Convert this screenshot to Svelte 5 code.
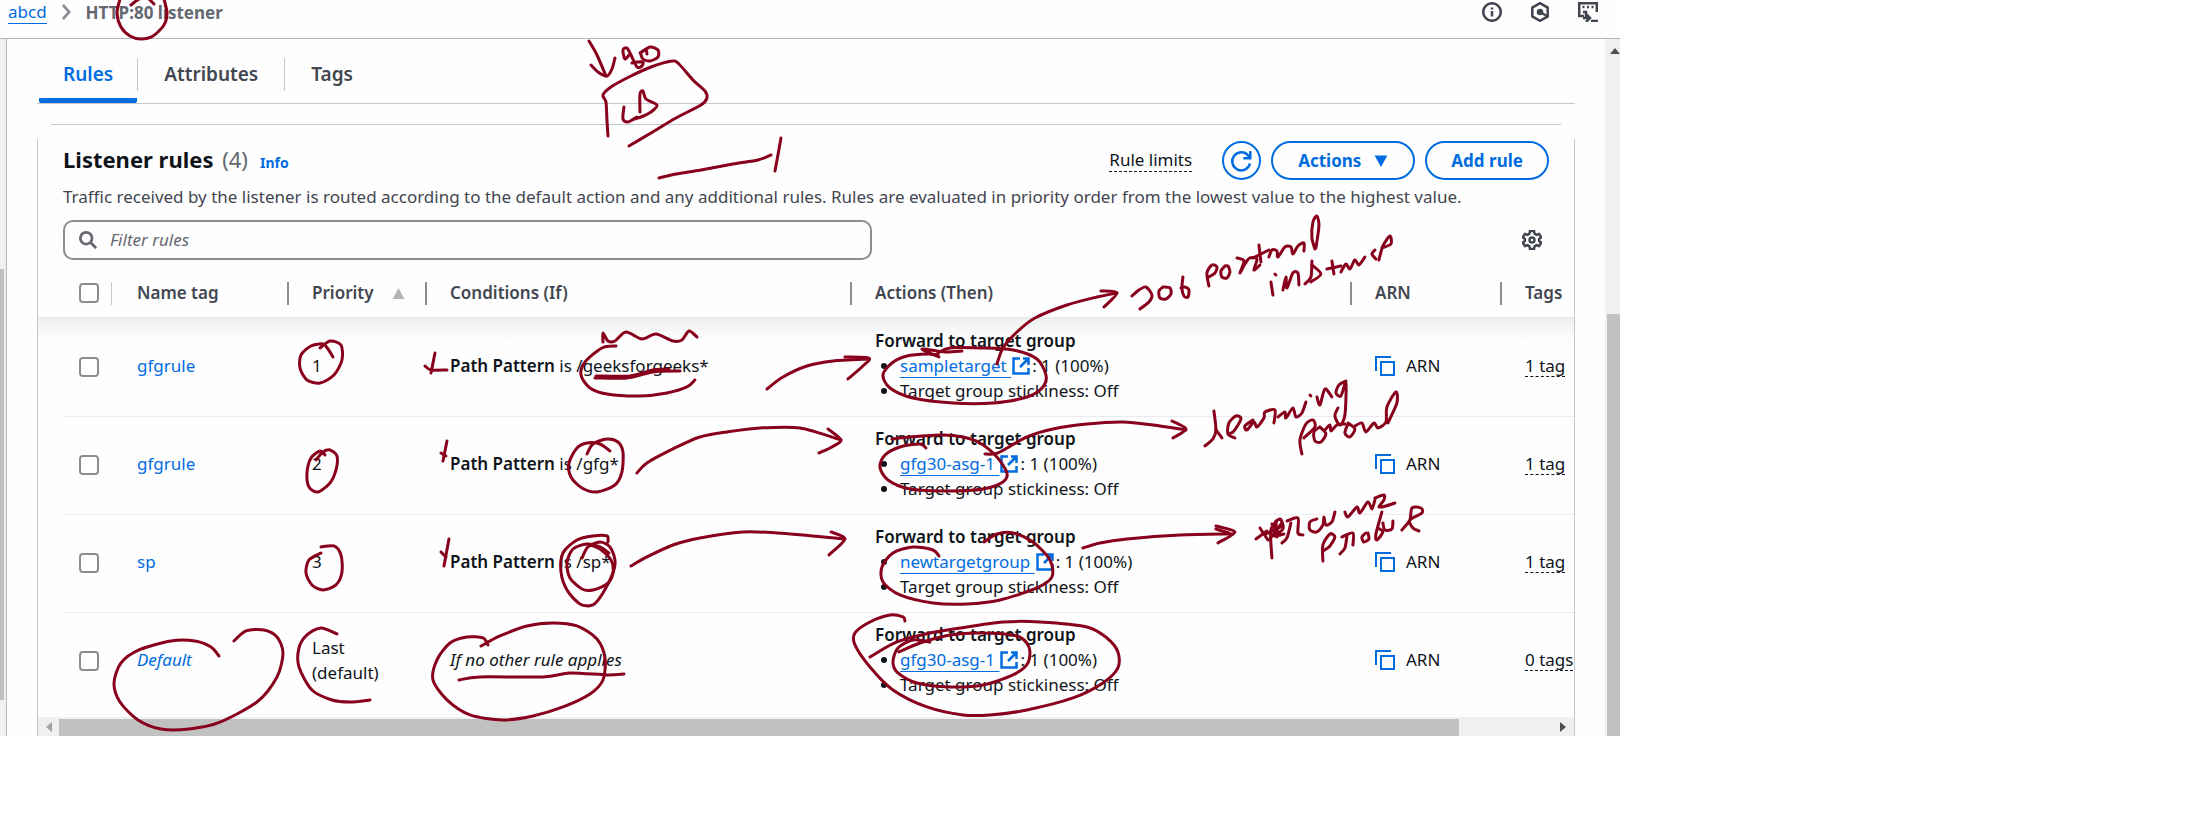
<script>
  const conditionPrefix = 'Path Pattern';
  const rules = [
    { id: 'r1', name: 'gfgrule', priority: ['1'], path: '/geeksforgeeks*', target: 'sampletarget', tags: '1 tag' },
    { id: 'r2', name: 'gfgrule', priority: ['2'], path: '/gfg*', target: 'gfg30-asg-1', tags: '1 tag' },
    { id: 'r3', name: 'sp', priority: ['3'], path: '/sp*', target: 'newtargetgroup', tags: '1 tag' },
    { id: 'r4', name: 'Default', isDefault: true, priority: ['Last', '(default)'], path: '', target: 'gfg30-asg-1', tags: '0 tags' }
  ];

  // Pen strokes, each a list of x,y points joined by a smooth curve.
  const curves = [
    '120,-1 117,13 121,27 130,36 141,39 153,36 164,25 167,13 164,-1',
    '131,5 136,1 141,-2', '148,-2 154,4',
    '589,41 597,55 606,76', '591,65 598,72 607,76 612,69 615,58',
    '629,55 625,59 623,50 627,48 631,55 637,67 642,66 643,62 637,62 632,63',
    '640,53 650,47 658,50 658,57 650,61 643,59 641,53 646,50 647,54',
    '608,136 607,120 606,102 603,95 611,87 629,77 651,67 672,61 679,64 693,80 705,91 707,98 701,105 676,118 651,133 629,146',
    '624,107 623,119 628,122 637,117', '640,112 640,94 643,91 646,99 657,105 651,112 641,117 634,119',
    '659,178 676,174 701,170 733,164 758,160 771,155', '781,138 778,155 775,171',
    '997,364 1003,348 1017,332 1035,318 1067,305 1097,297 1117,293', '1101,291 1117,293 1104,307',
    '1132,296 1139,290 1146,287 1152,295 1149,302 1140,309',
    '1163,287 1159,291 1160,298 1166,299 1171,294 1170,288 1163,287',
    '1183,277 1182,288 1184,296 1188,297 1189,290 1185,287 1181,288',
    '1209,286 1207,273 1212,265 1217,267 1215,273 1209,277',
    '1225,266 1221,271 1222,277 1227,278 1230,272 1228,266 1225,266',
    '1237,258 1244,261 1240,273 1245,264 1250,258 1257,259 1254,270 1260,265', '1259,245 1261,262', '1253,258 1269,250',
    '1269,257 1272,250 1277,251 1278,257 1285,247 1291,247 1293,254 1298,246 1304,243 1304,251',
    '1315,249 1312,238 1313,222 1317,216 1319,226 1316,248',
    '1273,295 1271,282', '1275,274 1276,275', '1283,290 1286,277 1287,288 1293,273 1298,273 1299,285',
    '1312,261 1311,277 1305,284', '1312,265 1321,274 1311,282', '1332,261 1334,274', '1327,269 1341,266',
    '1341,272 1346,264 1350,269 1355,260 1359,265 1365,257', '1375,250 1372,254 1376,259',
    '1379,260 1383,246 1390,236 1391,244 1382,248',
    '320,348 330,341 341,345 342,360 334,375 320,383 307,380 300,368 301,355 311,346 323,344 328,349 333,357',
    '316,460 323,452 330,450 337,456 336,470 330,483 318,492 309,487 307,473 311,458 320,451 325,455',
    '435,353 431,373', '425,366 431,370 447,370', '447,441 443,461', '441,453 446,456', '449,539 444,566', '441,552 446,557',
    '603,342 603,333 608,341 615,341 626,332 642,339 656,334 673,341 682,340 689,331 697,337',
    '616,346 602,348 585,362 581,375 590,388 607,394 640,396 667,393 687,387 695,380',
    '595,378 627,378 653,372 680,371', '596,376 630,376 653,370 669,369',
    '767,389 783,377 807,366 833,361 869,359', '845,357 869,358 863,366 848,379',
    '587,454 593,444 607,439 618,442 623,452 622,472 615,485 597,492 582,488 571,477 569,463 577,448 587,443 600,444 610,451',
    '637,473 647,463 677,447 700,437 727,432 760,428 800,428 841,440', '828,429 841,440 832,447 819,453',
    '962,351 945,352 922,349 939,357',
    '938,355 928,354 907,356 892,363 883,375 890,388 913,398 953,403 993,403 1027,397 1043,387 1046,375 1037,359 1013,350 980,348 950,348 938,353',
    '926,448 920,444 900,447 885,455 880,467 888,480 910,489 950,491 983,489 1003,482 1007,473 997,457 980,443 963,437 943,435 910,437 892,439',
    '985,454 998,453 1027,437 1053,429 1087,424 1123,422 1153,425 1186,430', '1172,421 1186,429 1173,438',
    '1214,411 1216,430 1213,439 1205,446', '1216,430 1222,438',
    '1229,434 1234,431 1241,419 1236,416 1229,423 1228,434 1235,438',
    '1253,420 1245,426 1247,430 1254,422 1257,427 1264,418 1265,412 1275,410 1274,423',
    '1278,417 1285,412 1286,418 1293,408 1296,417 1302,413 1306,402', '1310,395 1311,396',
    '1317,397 1320,405 1325,389 1332,397', '1346,381 1339,385 1336,393 1341,396 1346,383 1345,415 1340,425 1335,416 1338,408',
    '1302,454 1300,440 1306,424 1313,420 1315,427 1304,438',
    '1320,427 1314,432 1315,441 1321,442 1326,434 1320,427', '1325,430 1330,425 1331,431 1337,425 1345,424',
    '1348,424 1345,433 1350,437 1355,429 1348,423', '1355,426 1362,423 1366,432 1374,423 1378,428 1386,422 1387,407 1396,392 1397,403 1388,423',
    '1083,548 1100,543 1127,539 1180,535 1233,534', '1216,526 1235,532 1218,543', '1216,529 1229,533',
    '1256,539 1267,531', '1260,528 1268,540', '1272,558 1271,530 1280,519 1283,529 1274,536 1284,534', '1270,539 1282,523', '1266,534 1283,526',
    '1272,524 1280,535', '1276,521 1277,537',
    '1282,543 1287,538 1291,523', '1287,521 1298,518 1298,533 1303,535',
    '1317,519 1310,522 1310,530 1317,532 1323,525 1324,517 1326,525 1332,522 1335,512',
    '1345,512 1348,517 1357,507 1360,513 1368,502 1372,509 1375,500', '1375,498 1384,495 1384,500 1379,507 1386,506 1395,503',
    '1323,561 1323,545 1330,534 1335,537 1330,546 1323,551', '1340,554 1345,548 1347,536', '1342,537 1353,533 1353,545',
    '1366,533 1362,537 1364,542 1369,539 1368,533', '1382,512 1376,534 1377,540 1383,532 1378,528', '1383,523 1385,530 1392,529 1393,521',
    '1402,530 1410,520 1412,508 1421,508 1422,513 1410,520 1413,528 1419,531',
    '321,547 334,546 341,555 342,572 336,585 323,590 312,585 306,573 309,560 321,553',
    '219,656 211,647 195,641 171,641 139,650 121,663 114,683 120,702 138,720 161,729 189,729 218,723 257,702 277,677 283,653 277,637 264,630 246,631 234,641',
    '337,634 321,628 307,635 299,648 299,667 312,690 332,700 350,702 370,700',
    '608,542 607,536 593,536 577,540 563,553 561,572 567,590 580,604 593,605 603,593 613,573 615,560 610,547 600,542 588,547 582,558',
    '609,553 600,547 587,544 573,549 567,563 570,578 582,589 593,590 607,584 613,573 611,560 600,549 590,545',
    '631,566 647,557 673,545 700,538 743,532 777,533 813,536 845,539', '831,532 845,539 829,555',
    '481,646 500,636 527,626 553,623 577,626 597,639 605,658 603,680 590,694 563,707 533,716 503,720 470,715 447,700 433,680 437,660 450,643 467,637 483,638 488,645',
    '459,680 480,677 543,677 570,673 607,675 624,674',
    '939,556 933,550 913,547 893,553 882,567 883,582 900,595 933,603 967,604 1000,600 1037,588 1052,577 1050,560 1033,542 1013,533 997,534 984,542',
    '905,621 903,617 890,615 870,622 855,633 855,645 870,667 893,690 927,707 963,715 990,715 1027,710 1073,698 1103,683 1118,668 1118,652 1107,638 1087,627 1040,622 1003,622 967,627 930,633 897,642 870,657',
    '930,642 913,640 898,648 893,662 898,673 917,683 950,687 983,685 1013,675 1028,663 1029,647 1017,636 983,633 950,635 920,643 899,652'
  ];

  function toPath(text) {
    const p = text.split(' ').map((s) => s.split(',').map(Number));
    let d = `M${p[0][0]} ${p[0][1]}`;
    for (let i = 0; i < p.length - 1; i++) {
      const a = p[i - 1] ?? p[i], b = p[i], c = p[i + 1], e = p[i + 2] ?? c;
      d += `C${b[0] + (c[0] - a[0]) / 7} ${b[1] + (c[1] - a[1]) / 7} ${c[0] - (e[0] - b[0]) / 7} ${c[1] - (e[1] - b[1]) / 7} ${c[0]} ${c[1]}`;
    }
    return d;
  }
</script>

<div class="frame">
  <header>
    <nav aria-label="Breadcrumb">
      <a class="crumb" href="#abcd">abcd</a>
      <svg class="chev" viewBox="0 0 12 20"><path d="M2 2l7 8-7 8" /></svg>
      <span class="current">HTTP:80 listener</span>
    </nav>
    <div class="tools">
      <button aria-label="Info panel"><svg viewBox="0 0 20 20"><circle cx="10" cy="10" r="8.8" /><path d="M10 9v5.500M10 5.500v2" /></svg></button>
      <button aria-label="Diagnostics"><svg viewBox="0 0 20 20"><path d="M10 1.200l7.700 4.400v8.800L10 18.800l-7.700-4.400V5.600z" /><circle cx="10" cy="10" r="2" fill="#424650" /><path d="M10 10l7 4" /></svg></button>
      <button aria-label="CloudShell"><svg viewBox="0 0 20 20"><path d="M6 14H1.200V1.200h17.600V10M4.500 5h2M9 5h2M13.500 5h2M5 10h3v6M5 16h6M8 12l4 4-4 4M13 19h7" /></svg></button>
    </div>
  </header>

  <div class="body">
    <div class="rail"><div class="rail-thumb"></div></div>

    <main>
      <div class="tabs" role="tablist">
        <button role="tab" aria-selected="true" class="on"><span>Rules</span></button>
        <button role="tab" aria-selected="false"><span>Attributes</span></button>
        <button role="tab" aria-selected="false"><span>Tags</span></button>
      </div>

      <div class="topline"></div>
      <section>
        <div class="head">
          <h2>Listener rules <span>(4)</span></h2>
          <a class="info" href="#info">Info</a>
          <div class="actions">
            <button class="limits">Rule limits</button>
            <button class="pill round" aria-label="Refresh"><svg viewBox="0 0 20 20"><path d="M18.500 12.500A9 9 0 1 1 17 5l1.500 2M18.800 0v7.200h-7" /></svg></button>
            <button class="pill wide">Actions <svg viewBox="0 0 12 11"><path d="M1 1h10L6 10z" /></svg></button>
            <button class="pill">Add rule</button>
          </div>
        </div>
        <p class="desc">Traffic received by the listener is routed according to the default action and any additional rules. Rules are evaluated in priority order from the lowest value to the highest value.</p>
        <div class="filter">
          <label class="search">
            <svg viewBox="0 0 20 20"><circle cx="8" cy="8" r="6.500" /><path d="M12.500 12.500L19 19" /></svg>
            <input type="text" aria-label="Filter rules" placeholder="Filter rules" />
          </label>
          <button class="gear" aria-label="Preferences"><svg viewBox="0 0 20 20"><path d="M8 1h4l.6 2.700 1.900 1.100 2.600-.9 2 3.400-2 1.800v1.800l2 1.800-2 3.400-2.600-.9-1.900 1.100L12 19H8l-.6-2.700-1.900-1.100-2.600.9-2-3.400 2-1.800V9.100l-2-1.800 2-3.400 2.600.9 1.900-1.100z" /><circle cx="10" cy="10" r="2.500" /></svg></button>
        </div>

        <table>
          <colgroup><col class="c0" /><col class="c1" /><col class="c2" /><col class="c3" /><col class="c4" /><col class="c5" /><col /></colgroup>
          <thead>
            <tr>
              <th class="check"><input type="checkbox" aria-label="Select all rules" /></th>
              <th>Name tag</th>
              <th>Priority <svg class="sort" viewBox="0 0 12 11"><path d="M6 0l6 11H0z" /></svg></th>
              <th>Conditions (If)</th>
              <th>Actions (Then)</th>
              <th>ARN</th>
              <th>Tags</th>
            </tr>
          </thead>
          <tbody>
            {#each rules as rule (rule.id)}
              <tr>
                <td class="check"><input type="checkbox" aria-label={`Select ${rule.name} ${rule.priority[0]}`} /></td>
                <td><a href="#rule" class:it={rule.isDefault}>{rule.name}</a></td>
                <td>{#each rule.priority as line}<div>{line}</div>{/each}</td>
                <td>
                  {#if rule.isDefault}<em>If no other rule applies</em>{:else}<b>{conditionPrefix}</b> is {rule.path}{/if}
                </td>
                <td>
                  <b>Forward to target group</b>
                  <ul>
                    <li><a class="ext" href="#target">{rule.target}&nbsp;</a><svg class="out" viewBox="0 0 18 18"><path d="M8 1.500H1.500v15h15V11M11 1.500h5.500V8M16 2L8 10" /></svg>: 1 (100%)</li>
                    <li>Target group stickiness: Off</li>
                  </ul>
                </td>
                <td><button class="copy"><svg viewBox="0 0 20 20"><path d="M1 15V1h15M6 6h13v13H6z" /></svg>ARN</button></td>
                <td><button class="tag">{rule.tags}</button></td>
              </tr>
            {/each}
          </tbody>
        </table>

        <div class="hbar">
          <svg viewBox="0 0 6 10"><path d="M6 0v10L0 5z" fill="#a3a3a3" /></svg>
          <div class="track"><div class="hthumb"></div></div>
          <svg viewBox="0 0 6 10"><path d="M0 0v10l6-5z" fill="#505050" /></svg>
        </div>
      </section>
    </main>

    <div class="vbar">
      <svg viewBox="0 0 10 6"><path d="M0 6h10L5 0z" fill="#505050" /></svg>
      <div class="vthumb"></div>
    </div>
  </div>

  <svg class="ink" viewBox="0 0 1620 736" aria-hidden="true">
    {#each curves as c}<path d={toPath(c)} />{/each}
  </svg>
</div>

<style>
  :global(body) { background: #fff; }
  .frame, .frame * { box-sizing: border-box; }
  .frame {
    position: relative;
    width: 73.8%;
    overflow: hidden;
    font: 17px/25px 'Noto Sans', 'Open Sans', sans-serif;
    color: #0f141a;
    background: #fefefe;
  }
  button { font: inherit; color: inherit; background: none; border: 0; padding: 0; }
  a { color: #006ce0; text-decoration: none; }
  svg { display: block; fill: none; flex: none; }
  b { font-weight: 600; }

  header { display: flex; align-items: flex-start; justify-content: space-between; height: 39px; padding: 0 22px 0 8px; border-bottom: 1px solid #b4b4bb; }
  nav { display: flex; align-items: center; gap: 14px; line-height: 23px; }
  .crumb { border-bottom: 1px solid #006ce0; }
  .chev { width: 11px; height: 18px; stroke: #8c8c94; stroke-width: 3; }
  .current { font-weight: 700; color: #656871; }
  .tools { display: flex; gap: 28px; padding-top: 2px; }
  .tools svg { width: 20px; height: 20px; stroke: #424650; stroke-width: 2.5; }

  .body { display: flex; align-items: stretch; }
  .rail { width: 7px; background: #f0f0f0; border-right: 1px solid #b4b4bb; padding-top: 230px; padding-bottom: 36px; display: flex; }
  .rail-thumb { width: 4px; background: #c1c1c1; }
  main { flex: 1; min-width: 0; padding: 0 30px; }

  .tabs { display: flex; border-bottom: 1px solid #c6c6cd; padding: 19px 2px 0; height: 65px; }
  .tabs button { height: 45px; padding-bottom: 12px; font-size: 19px; font-weight: 600; color: #424650; }
  .tabs span { display: block; padding: 0 26px; line-height: 33px; border-left: 1px solid #c6c6cd; }
  .tabs .on { color: #006ce0; border-bottom: 5px solid #006ce0; border-radius: 2px; padding-bottom: 7px; }
  .tabs .on span { padding: 0 24px; border-left: 0; }

  .topline { height: 1px; margin: 20px 14px 14px; background: #c6c6cd; }
  section { border: solid #c6c6cd; border-width: 0 1px; }
  .head { display: flex; align-items: center; padding: 1px 25px 0; height: 42px; }
  h2 { margin: 0; padding-bottom: 3px; font-size: 22px; line-height: 30px; font-weight: 700; }
  h2 span { margin-left: 3px; font-weight: 400; color: #656871; }
  .info { margin: 3px 0 0 12px; font-size: 14px; font-weight: 700; }
  .actions { display: flex; align-items: center; gap: 10px; margin-left: auto; }
  .limits { border-bottom: 1px dashed #0f141a; line-height: 22px; margin-right: 20px; }
  .pill { display: flex; align-items: center; justify-content: center; gap: 13px; height: 39px; padding: 0 24px; border: 2px solid #006ce0; border-radius: 20px; color: #006ce0; font-weight: 700; }
  .wide { padding: 0 25px; }
  .round { width: 39px; padding: 0; }
  .round svg { width: 21px; height: 20px; stroke: #006ce0; stroke-width: 2.5; overflow: visible; }
  .wide svg { width: 14px; height: 12px; fill: #006ce0; stroke: #006ce0; stroke-width: 1; }
  .desc { margin: 0; padding: 3px 25px 0; color: #424650; white-space: nowrap; }
  .filter { display: flex; align-items: center; justify-content: space-between; padding: 11px 32px 0 25px; }
  .search { display: flex; align-items: center; gap: 13px; flex: 0 1 809px; height: 40px; padding: 0 14px; border: 2px solid #8c8c94; border-radius: 10px; }
  .search svg { width: 18px; height: 18px; stroke: #656871; stroke-width: 3; }
  .search input { flex: 1; min-width: 0; border: 0; outline: 0; padding: 0 0 2px; background: none; font: inherit; }
  .search input::placeholder { color: #656871; font-style: italic; opacity: 1; }
  .gear svg { width: 20px; height: 20px; stroke: #424650; stroke-width: 2.5; }

  table { width: 100%; table-layout: fixed; border-collapse: separate; border-spacing: 0; margin-top: 10px; }
  .c0 { width: 74px; }
  .c1 { width: 175px; }
  .c2 { width: 138px; }
  .c3 { width: 425px; }
  .c4 { width: 500px; }
  .c5 { width: 150px; }
  th, td { padding: 0 0 0 25px; text-align: left; white-space: nowrap; }
  th {
    height: 49px;
    padding-bottom: 2px;
    font-weight: 600;
    color: #424650;
    border-bottom: 2px solid #ebebf0;
    background: linear-gradient(#8c8c94, #8c8c94) left 0 top 12px / 2px 23px no-repeat;
  }
  th.check { background: linear-gradient(#c6c6cd, #c6c6cd) right 0 top 12px / 1px 23px no-repeat; }
  th:nth-child(2) { background: none; }
  .check { padding-left: 41px; }
  .check input { appearance: none; display: block; width: 20px; height: 20px; margin: 0; border: 2px solid #8c8c94; border-radius: 4px; background: #fff; }
  .sort { display: inline-block; width: 13px; height: 11px; margin-left: 14px; fill: #b4b4bb; }
  td { height: 98px; padding-bottom: 5px; background: linear-gradient(#ebebf0, #ebebf0) left 0 bottom 0 / 100% 1px no-repeat; }
  td.check { padding-bottom: 3px; background: linear-gradient(#ebebf0, #ebebf0) right 0 bottom 0 / calc(100% - 26px) 1px no-repeat; }
  tbody tr:last-child td { background: none; }
  tbody tr:first-child { background: linear-gradient(#eff0f0, #fefefe00 22px); }
  .it { font-style: italic; }
  ul { margin: 0; padding: 0 0 0 25px; }
  .ext { text-decoration: underline; text-decoration-thickness: 1px; text-underline-offset: 5px; }
  .out { display: inline-block; width: 18px; height: 18px; margin: 0 2px 0 1px; vertical-align: -3px; stroke: #006ce0; stroke-width: 2.5; }
  .copy { display: flex; align-items: center; gap: 11px; }
  .copy svg { width: 20px; height: 20px; stroke: #006ce0; stroke-width: 2; }
  .tag { border-bottom: 1px dashed #0f141a; line-height: 21px; }

  .hbar { display: flex; align-items: center; gap: 7px; height: 19px; margin-top: 6px; padding: 0 8px; background: #f0f0f0; }
  .hbar svg { width: 6px; height: 10px; }
  .track { flex: 1; height: 100%; padding-top: 2px; }
  .hthumb { width: 93.7%; height: 100%; background: #c1c1c1; }
  .vbar { width: 15px; background: #f0f0f0; padding: 9px 0 0 2px; display: flex; flex-direction: column; gap: 260px; }
  .vbar svg { width: 10px; height: 6px; margin-left: 3px; }
  .vthumb { flex: 1; background: #c1c1c1; }

  .ink { position: absolute; left: 0; top: 0; width: 100%; pointer-events: none; stroke: #88001b; stroke-width: 3; stroke-linecap: round; stroke-linejoin: round; }
</style>
